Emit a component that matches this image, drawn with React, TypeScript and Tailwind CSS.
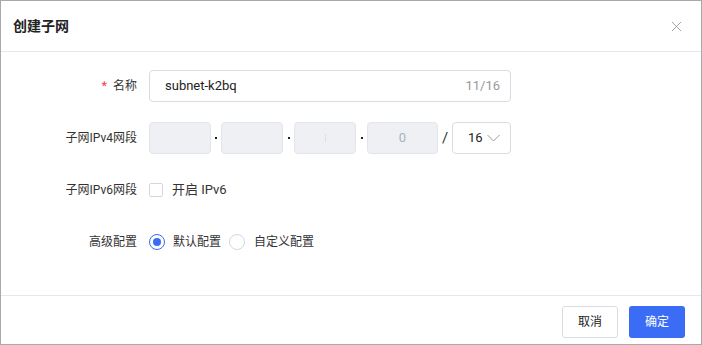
import { X } from "lucide-react";

const font = { fontFamily: 'Roboto, "Liberation Sans", "Noto Sans CJK SC", sans-serif' };

function Label({ children, required }: { children: React.ReactNode; required?: boolean }) {
  return (
    <div className="flex w-[136px] shrink-0 items-center justify-end text-[12px] text-[#333]">
      {required ? <span className="mr-1.5 text-[13px] text-[#f04848]">*</span> : null}
      {children}
    </div>
  );
}

function IpBox({ w, children }: { w: string; children?: React.ReactNode }) {
  return (
    <div
      className={`flex h-[32px] ${w} items-center justify-center rounded-[4px] border border-[#e2e5ea] bg-[#eef0f4] text-[13px] text-[#aab0b8]`}
    >
      {children}
    </div>
  );
}

function Dot({ w }: { w: string }) {
  return (
    <div className={`flex ${w} items-center justify-center`}>
      <span className="h-[2px] w-[2px] bg-[#222]" />
    </div>
  );
}

export default function App() {
  return (
    <div style={font} className="flex h-[345px] w-[702px] flex-col border border-[#a9a9a9] bg-white">
      <div className="flex h-[51px] items-center justify-between border-b border-[#e6e8ef] pl-[12px] pr-[16px]">
        <h1 className="text-[14px] font-semibold text-[#222]">创建子网</h1>
        <X size={17} strokeWidth={1.1} className="text-[#888]" />
      </div>

      <div className="flex flex-1 flex-col gap-[20px] pt-[18px]">
        <div className="flex h-[32px] items-center gap-[12px]">
          <Label required>名称</Label>
          <div className="flex h-[32px] w-[362px] items-center justify-between rounded-[4px] border border-[#d9dce1] pl-[15px] pr-[10px] text-[13px]">
            <span className="text-[#222]">subnet-k2bq</span>
            <span className="text-[#999]">11/16</span>
          </div>
        </div>

        <div className="flex h-[32px] items-center gap-[12px]">
          <Label>子网IPv4网段</Label>
          <div className="flex items-center">
            <IpBox w="w-[62px]" />
            <Dot w="w-[10px]" />
            <IpBox w="w-[62px]" />
            <Dot w="w-[11px]" />
            <IpBox w="w-[62px]">
              <span className="h-[8px] w-px bg-[#dde0e5]" />
            </IpBox>
            <Dot w="w-[11px]" />
            <IpBox w="w-[71px]">0</IpBox>
            <div className="flex w-[14px] justify-center text-[15px] text-[#333]">/</div>
            <div className="flex h-[32px] w-[59px] items-center justify-between rounded-[4px] border border-[#d9dce1] pl-[15px] pr-[10px] text-[13px] text-[#222]">
              <span>16</span>
              <svg width="13" height="8" viewBox="0 0 13 8" fill="none" className="text-[#9a9a9a]">
                <path d="M0.5 1 L6.5 7 L12.5 1" stroke="currentColor" strokeWidth="1" />
              </svg>
            </div>
          </div>
        </div>

        <div className="flex h-[32px] items-center gap-[12px]">
          <Label>子网IPv6网段</Label>
          <div className="flex items-center gap-[9px] text-[12px] text-[#333]">
            <span className="h-[14px] w-[14px] rounded-[2px] border border-[#d4d7dc] bg-white" />
            <span className="text-[13px]">开启 IPv6</span>
          </div>
        </div>

        <div className="flex h-[32px] items-center gap-[12px]">
          <Label>高级配置</Label>
          <div className="flex items-center text-[12px] text-[#333]">
            <span className="flex h-[16px] w-[16px] items-center justify-center rounded-full border border-[#3b6cf6]">
              <span className="h-[8px] w-[8px] rounded-full bg-[#3b6cf6]" />
            </span>
            <span className="ml-[8px]">默认配置</span>
            <span className="ml-[8px] h-[16px] w-[16px] rounded-full border border-[#d4d7dc]" />
            <span className="ml-[9px]">自定义配置</span>
          </div>
        </div>
      </div>

      <div className="flex h-[49px] items-start justify-end gap-[11px] border-t border-[#e6e8ef] pr-[16px] pt-[10px]">
        <button className="h-[32px] w-[56px] rounded-[3px] border border-[#d9dce1] bg-white text-[12px] text-[#222]">取消</button>
        <button className="h-[32px] w-[56px] rounded-[3px] bg-[#3b6cf6] text-[12px] text-white">确定</button>
      </div>
    </div>
  );
}
